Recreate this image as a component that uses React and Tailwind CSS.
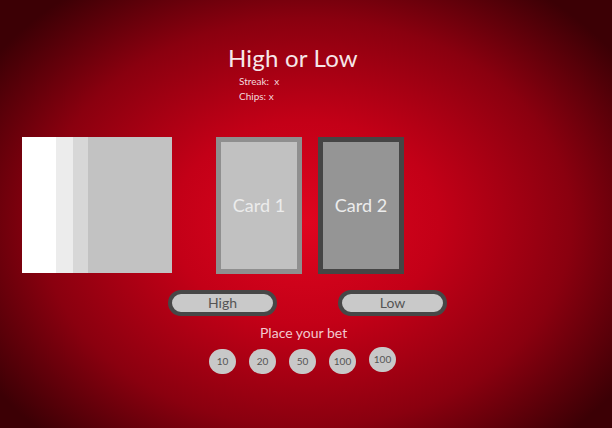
export default function App() {
  const chips = [
    { v: '10', cls: 'mt-0' },
    { v: '20', cls: 'mt-0' },
    { v: '50', cls: 'mt-0' },
    { v: '100', cls: 'mt-0' },
    { v: '100', cls: '-mt-[2px]' },
  ]

  return (
    <div
      className="w-[612px] h-[428px] overflow-hidden flex flex-col bg-[radial-gradient(ellipse_62%_68%_at_50%_52%,#e0051f_0%,#c30017_35%,#8a000f_70%,#3c0005_100%)]"
      style={{ fontFamily: 'Lato, "Open Sans", sans-serif' }}
    >
      {/* header */}
      <div className="mt-[43px] ml-[228px] flex flex-col">
        <h1 className="text-[24px] leading-[30px] text-[#f6e6e8] tracking-[0.2px]">High or Low</h1>
        <div className="ml-[11px] mt-[1px] text-[10px] leading-[15px] text-[#f3dadd]">
          <p>Streak:&nbsp; x</p>
          <p>Chips: x</p>
        </div>
      </div>

      {/* table */}
      <div className="mt-[33px] flex items-start">
        <div className="ml-[22px] w-[150px] h-[136px] flex">
          <div className="w-[34px] bg-white" />
          <div className="w-[17px] bg-[#ececec]" />
          <div className="w-[15px] bg-[#d7d7d7]" />
          <div className="flex-1 bg-[#c2c2c2]" />
        </div>
        <div className="ml-[44px] w-[86px] h-[137px] border-[5px] border-[#8f8f8f] bg-[#c1c1c1] flex items-center justify-center">
          <span className="text-[18px] text-[#ececec]">Card 1</span>
        </div>
        <div className="ml-[16px] w-[86px] h-[137px] border-[5px] border-[#454545] bg-[#959595] flex items-center justify-center">
          <span className="text-[18px] text-[#ececec]">Card 2</span>
        </div>
      </div>

      {/* choices */}
      <div className="mt-[16px] ml-[168px] flex">
        <button className="w-[109px] h-[26px] rounded-full border-4 border-[#474747] bg-[#c9c9c9] text-[14px] leading-[18px] text-[#555] flex items-center justify-center">
          High
        </button>
        <button className="ml-[61px] w-[109px] h-[26px] rounded-full border-4 border-[#474747] bg-[#c9c9c9] text-[14px] leading-[18px] text-[#555] flex items-center justify-center">
          Low
        </button>
      </div>

      <p className="mt-[8px] ml-[260px] text-[14px] leading-[18px] text-[#f2c9cf]">Place your bet</p>

      <div className="mt-[7px] ml-[209px] flex gap-[13px] items-start">
        {chips.map((c, i) => (
          <div
            key={i}
            className={`w-[27px] h-[25px] rounded-full bg-[#c8c8c8] flex items-center justify-center text-[10px] text-[#555] ${c.cls}`}
          >
            {c.v}
          </div>
        ))}
      </div>
    </div>
  )
}
